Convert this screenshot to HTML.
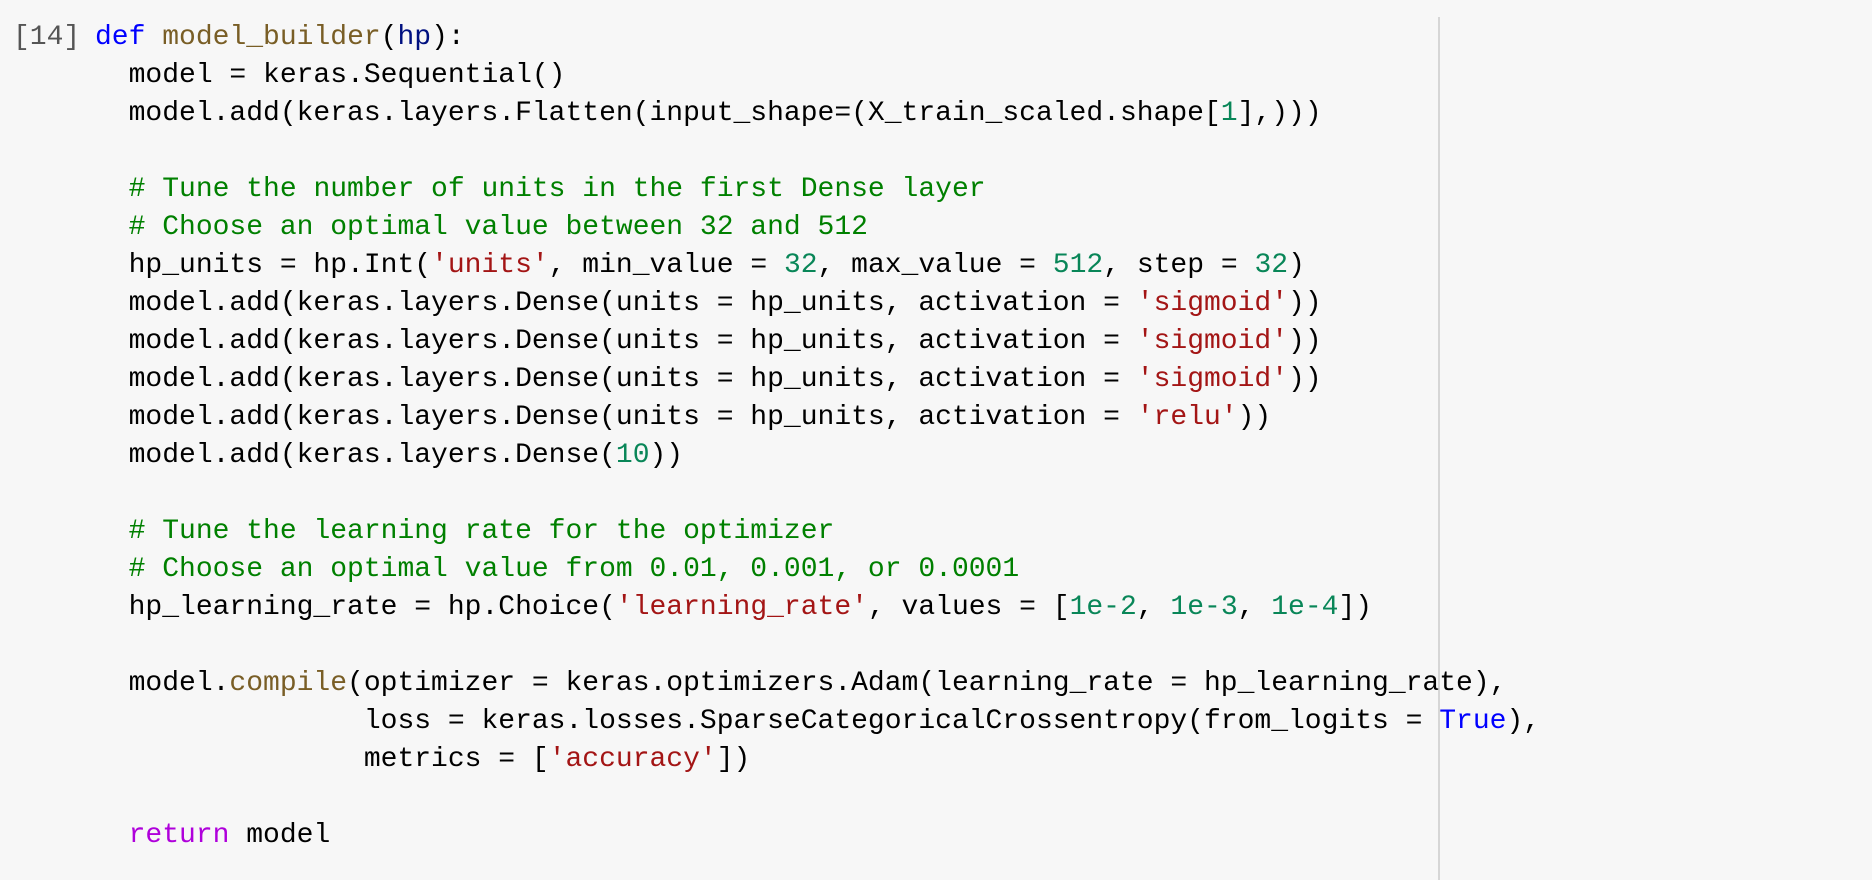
<!DOCTYPE html>
<html><head><meta charset="utf-8"><style>
html,body{margin:0;padding:0;background:#f7f7f7;width:1872px;height:880px;overflow:hidden;}
.ruler{position:absolute;left:1438px;top:17px;width:2px;height:863px;background:#d6d6d6;}
pre{position:absolute;left:0;top:19px;margin:0;font-family:"Liberation Mono",monospace;font-size:28px;line-height:38px;color:#000;}
.p{position:absolute;left:13px;top:19px;font-family:"Liberation Mono",monospace;font-size:28px;line-height:38px;color:#555;}
.k{color:#0000ff}.f{color:#795e26}.v{color:#001080}.c{color:#008000}.s{color:#a31515}.n{color:#098658}.r{color:#af00db}
</style></head><body>
<div class="ruler"></div>
<div class="p">[14]</div>
<pre style="left:95px"><span class="k">def</span> <span class="f">model_builder</span>(<span class="v">hp</span>):
  model = keras.Sequential()
  model.add(keras.layers.Flatten(input_shape=(X_train_scaled.shape[<span class="n">1</span>],)))

  <span class="c"># Tune the number of units in the first Dense layer</span>
  <span class="c"># Choose an optimal value between 32 and 512</span>
  hp_units = hp.Int(<span class="s">'units'</span>, min_value = <span class="n">32</span>, max_value = <span class="n">512</span>, step = <span class="n">32</span>)
  model.add(keras.layers.Dense(units = hp_units, activation = <span class="s">'sigmoid'</span>))
  model.add(keras.layers.Dense(units = hp_units, activation = <span class="s">'sigmoid'</span>))
  model.add(keras.layers.Dense(units = hp_units, activation = <span class="s">'sigmoid'</span>))
  model.add(keras.layers.Dense(units = hp_units, activation = <span class="s">'relu'</span>))
  model.add(keras.layers.Dense(<span class="n">10</span>))

  <span class="c"># Tune the learning rate for the optimizer</span>
  <span class="c"># Choose an optimal value from 0.01, 0.001, or 0.0001</span>
  hp_learning_rate = hp.Choice(<span class="s">'learning_rate'</span>, values = [<span class="n">1e-2</span>, <span class="n">1e-3</span>, <span class="n">1e-4</span>])

  model.<span class="f">compile</span>(optimizer = keras.optimizers.Adam(learning_rate = hp_learning_rate),
                loss = keras.losses.SparseCategoricalCrossentropy(from_logits = <span class="k">True</span>),
                metrics = [<span class="s">'accuracy'</span>])

  <span class="r">return</span> model</pre>
</body></html>
